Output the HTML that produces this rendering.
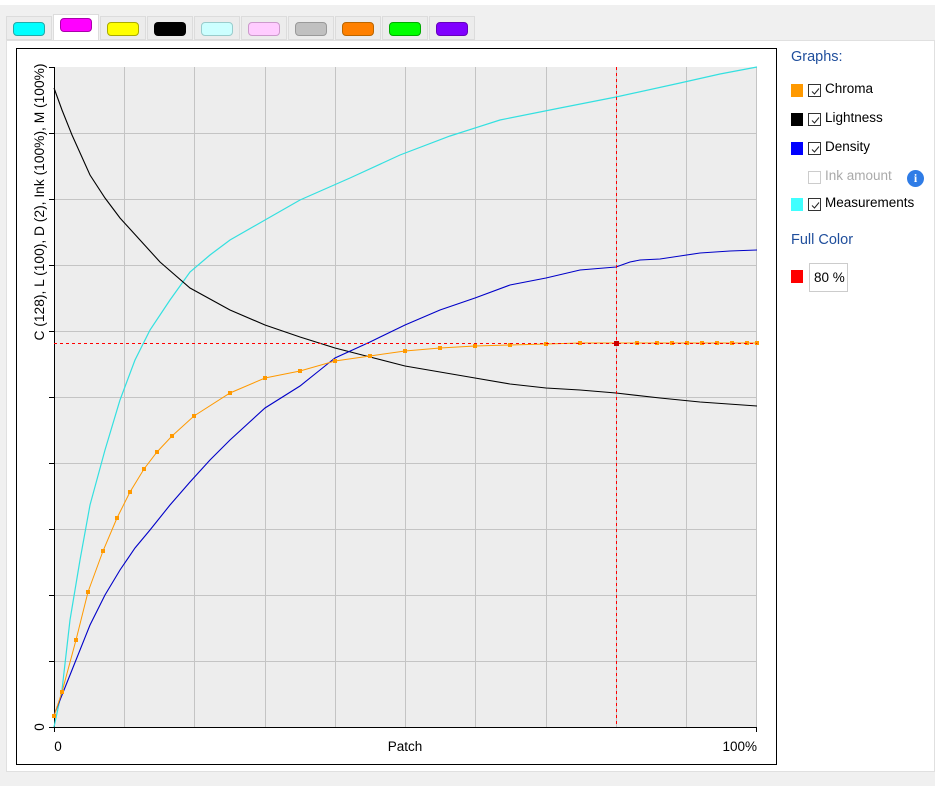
<!DOCTYPE html>
<html><head><style>
body{margin:0;width:935px;height:786px;background:#f0f0f0;font-family:"Segoe UI","Liberation Sans",sans-serif;position:relative;overflow:hidden}
.top{position:absolute;left:0;top:0;width:935px;height:5px;background:#fff}
.tab{position:absolute;top:16px;width:46px;height:24px;background:#ececec;border:1px solid #dcdcdc;box-sizing:border-box}
.tab i{position:absolute;left:6px;top:5px;width:32px;height:14px;border-radius:4px;box-sizing:border-box}
.panel{position:absolute;left:6px;top:40px;width:929px;height:732px;background:#fff;border:1px solid #e0e0e0;box-sizing:border-box}
.lbl{position:absolute;font-size:13.5px;color:#000}
.blue{color:#1f4e9c;font-size:14.5px}
.sw{position:absolute;width:12px;height:13px}
.cb{position:absolute;width:13px;height:13px;border:1px solid #333;box-sizing:border-box}
.cb svg{position:absolute;left:1px;top:1px}
</style></head><body>
<div class="top"></div>
<div class="tab" style="left:6px"><i style="background:#00ffff;border:1px solid #2aa"></i></div>
<div class="tab" style="left:53px;top:14px;height:27px;background:#fff;border-bottom:none"><i style="top:3px;background:#ff00ff;border:1px solid #a0a"></i></div>
<div class="tab" style="left:100px"><i style="background:#ffff00;border:1px solid #aa0"></i></div>
<div class="tab" style="left:147px"><i style="background:#000"></i></div>
<div class="tab" style="left:194px"><i style="background:#ccffff;border:1px solid #9cc"></i></div>
<div class="tab" style="left:241px"><i style="background:#ffccff;border:1px solid #c9c"></i></div>
<div class="tab" style="left:288px"><i style="background:#c0c0c0;border:1px solid #999"></i></div>
<div class="tab" style="left:335px"><i style="background:#ff8000;border:1px solid #b60"></i></div>
<div class="tab" style="left:382px"><i style="background:#00ff00;border:1px solid #0a0"></i></div>
<div class="tab" style="left:429px"><i style="background:#8000ff;border:1px solid #60b"></i></div>
<div class="panel"></div>
<svg style="position:absolute;left:0;top:0" width="935" height="786">
<rect x="16.5" y="48.5" width="760" height="716" fill="#fff" stroke="#000" stroke-width="1"/>
<rect x="54" y="67" width="703" height="660" fill="#ededed"/>
<g stroke="#c4c4c4" stroke-width="1">
<path d="M124.5 67V727M194.5 67V727M265.5 67V727M335.5 67V727M405.5 67V727M475.5 67V727M546.5 67V727M616.5 67V727M686.5 67V727M756.5 67V727"/>
<path d="M54 133.5H757M54 199.5H757M54 265.5H757M54 331.5H757M54 397.5H757M54 463.5H757M54 529.5H757M54 595.5H757M54 661.5H757"/>
</g>
<path d="M54.5 67V732M49 67.5H54M49 727.5H757M49 133.5H54M49 199.5H54M49 265.5H54M49 331.5H54M49 397.5H54M49 463.5H54M49 529.5H54M49 595.5H54M49 661.5H54M756.5 727V732" stroke="#000" fill="none"/>
<polyline fill="none" stroke="#33e0e0" stroke-width="1.2" points="54,727 62,690 70,620 80,560 90,505 105,450 120,400 135,360 150,330 170,300 190,272 210,255 230,240 265,220 300,200 350,178 400,155 450,136 500,120 560,108 616,97 680,83 720,74 757,67"/>
<polyline fill="none" stroke="#000" stroke-width="1.1" points="54,88 62,110 72,135 90,175 105,198 120,218 140,240 160,262 190,288 230,310 265,325 300,337 335,348 370,357 405,366 440,372 475,378 510,384 546,388 580,390 616,393 660,398 700,402 757,406"/>
<polyline fill="none" stroke="#0000c8" stroke-width="1.1" points="54,715 62,695 72,670 90,625 105,595 120,570 135,548 150,530 170,505 190,482 210,460 230,440 265,408 300,386 320,370 335,358 370,342 405,325 440,310 475,298 510,285 546,278 580,270 616,267 630,262 640,260 660,259 680,256 700,253 730,251 757,250"/>
<polyline fill="none" stroke="#ff9900" stroke-width="1" points="54,716 62,692 76,640 88,592 103,551 117,518 130,492 144,469 157,452 172,436 194,416 230,393 265,378 300,371 335,361 370,356 405,351 440,348 475,346 510,345 546,344 580,343 616,343 757,343"/>
<g fill="#ff9900">
<rect x="52" y="714" width="4" height="4"/><rect x="60" y="690" width="4" height="4"/><rect x="74" y="638" width="4" height="4"/><rect x="86" y="590" width="4" height="4"/><rect x="101" y="549" width="4" height="4"/><rect x="115" y="516" width="4" height="4"/><rect x="128" y="490" width="4" height="4"/><rect x="142" y="467" width="4" height="4"/><rect x="155" y="450" width="4" height="4"/><rect x="170" y="434" width="4" height="4"/><rect x="192" y="414" width="4" height="4"/><rect x="228" y="391" width="4" height="4"/><rect x="263" y="376" width="4" height="4"/><rect x="298" y="369" width="4" height="4"/><rect x="333" y="359" width="4" height="4"/><rect x="368" y="354" width="4" height="4"/><rect x="403" y="349" width="4" height="4"/><rect x="438" y="346" width="4" height="4"/><rect x="473" y="344" width="4" height="4"/><rect x="508" y="343" width="4" height="4"/><rect x="544" y="342" width="4" height="4"/><rect x="578" y="341" width="4" height="4"/><rect x="635" y="341" width="4" height="4"/><rect x="655" y="341" width="4" height="4"/><rect x="670" y="341" width="4" height="4"/><rect x="685" y="341" width="4" height="4"/><rect x="700" y="341" width="4" height="4"/><rect x="715" y="341" width="4" height="4"/><rect x="730" y="341" width="4" height="4"/><rect x="745" y="341" width="4" height="4"/><rect x="755" y="341" width="4" height="4"/>
</g>
<path d="M54 343.5H757M616.5 67V727" stroke="#ff0000" stroke-dasharray="3,3" fill="none"/>
<rect x="614" y="341" width="5" height="5" fill="#c00"/>
<g font-family="Segoe UI, Liberation Sans, sans-serif" font-size="13.5" fill="#000">
<text x="58" y="751" text-anchor="middle">0</text>
<text x="405" y="751" text-anchor="middle">Patch</text>
<text x="757" y="751" text-anchor="end">100%</text>
<text transform="translate(44,202) rotate(-90)" text-anchor="middle" font-size="13.8">C (128), L (100), D (2), Ink (100%), M (100%)</text>
<text transform="translate(44,727) rotate(-90)" text-anchor="middle">0</text>
</g>
</svg>
<div class="lbl blue" style="left:791px;top:49px">Graphs:</div>
<div class="sw" style="left:791px;top:84px;background:#ff9900"></div><div class="cb" style="left:808px;top:84px"><svg width="11" height="11"><path d="M2 5.5L4.5 8L9 2.5" stroke="#222" fill="none"/></svg></div><div class="lbl" style="left:825px;top:81px">Chroma</div>
<div class="sw" style="left:791px;top:113px;background:#000"></div><div class="cb" style="left:808px;top:113px"><svg width="11" height="11"><path d="M2 5.5L4.5 8L9 2.5" stroke="#222" fill="none"/></svg></div><div class="lbl" style="left:825px;top:110px">Lightness</div>
<div class="sw" style="left:791px;top:142px;background:#0000ff"></div><div class="cb" style="left:808px;top:142px"><svg width="11" height="11"><path d="M2 5.5L4.5 8L9 2.5" stroke="#222" fill="none"/></svg></div><div class="lbl" style="left:825px;top:139px">Density</div>
<div class="cb" style="left:808px;top:171px;border-color:#ccc"></div><div class="lbl" style="left:825px;top:168px;color:#aaa">Ink amount</div>
<div style="position:absolute;left:907px;top:170px;width:17px;height:17px;border-radius:50%;background:#2f7ce6;color:#fff;font:bold 12px 'Liberation Serif',serif;text-align:center;line-height:17px">i</div>
<div class="sw" style="left:791px;top:198px;background:#40ffff"></div><div class="cb" style="left:808px;top:198px"><svg width="11" height="11"><path d="M2 5.5L4.5 8L9 2.5" stroke="#222" fill="none"/></svg></div><div class="lbl" style="left:825px;top:195px">Measurements</div>
<div class="lbl blue" style="left:791px;top:232px">Full Color</div>
<div class="sw" style="left:791px;top:270px;background:#ff0000"></div>
<div style="position:absolute;left:809px;top:263px;width:39px;height:29px;border:1px solid #ccc;box-sizing:border-box;font-size:13.5px;line-height:27px;padding-left:4px">80 %</div>
</body></html>
